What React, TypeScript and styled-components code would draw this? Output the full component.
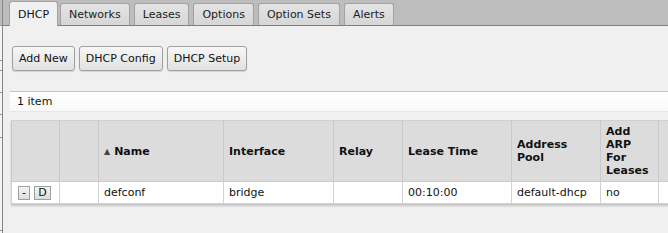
import styled, { createGlobalStyle, css } from "styled-components"

const GlobalStyle = createGlobalStyle`
  html, body {
    margin: 0;
    padding: 0;
    overflow: hidden;
    background: #f0f0f0;
  }
  body {
    font-family: "DejaVu Sans", Verdana, sans-serif;
    font-size: 11px;
    color: #111;
  }
`

const Page = styled.div`
  display: flex;
  height: 233px;
  width: 668px;
  overflow: hidden;
`

const Sidebar = styled.div`
  flex: none;
  width: 2px;
  border-right: 1px solid #858585;
  display: flex;
  flex-direction: column;
  background: #f4f4f4;
`

const SideItem = styled.div<{ $h: number; $top?: boolean }>`
  height: ${({ $h }) => $h}px;
  flex: none;
  border-bottom: 1px solid #9a9a9a;
  background: ${({ $top }) => ($top ? "#bdbdbd" : "#f4f4f4")};
`

const Main = styled.div`
  flex: 1;
  min-width: 0;
  overflow: hidden;
  display: flex;
  flex-direction: column;
`

const TabBar = styled.div`
  display: flex;
  align-items: flex-end;
  height: 25px;
  padding-left: 6px;
  background: #bdbdbd;
  border-bottom: 1px solid #7f7f7f;
`

const Tab = styled.div<{ $active?: boolean }>`
  position: relative;
  box-sizing: border-box;
  height: 22px;
  padding: 0 8px;
  margin-right: 4px;
  display: flex;
  align-items: center;
  border: 1px solid #a2a2a2;
  border-bottom: none;
  border-radius: 3px 3px 0 0;
  background: linear-gradient(#e4e4e4, #d6d6d6);
  color: #222;
  ${({ $active }) =>
    $active &&
    css`
      height: 25px;
      margin-bottom: -1px;
      margin-right: 2px;
      padding-top: 1px;
      background: #f0f0f0;
      color: #111;
    `}
`

const Content = styled.div`
  display: flex;
  flex-direction: column;
  padding: 20px 0 0 7px;
`

const Toolbar = styled.div`
  display: flex;
  gap: 4px;
  padding-left: 2px;
  margin-bottom: 20px;
`

const Button = styled.button`
  box-sizing: border-box;
  height: 25px;
  padding: 0 6px;
  font: inherit;
  color: #111;
  border: 1px solid #a0a0a0;
  border-radius: 3px;
  background: linear-gradient(#f7f7f7, #e1e1e1);
  box-shadow: 0 1px 1px rgba(0, 0, 0, 0.12);
`

const StatusBar = styled.div`
  box-sizing: border-box;
  width: 700px;
  height: 21px;
  padding-left: 7px;
  display: flex;
  align-items: center;
  border-top: 1px solid #c4c4c4;
  border-bottom: 1px solid #e6e6e6;
  background: linear-gradient(#ffffff, #f9f9f9);
  margin-bottom: 8px;
`

const Table = styled.table`
  margin-left: 1px;
  border-collapse: collapse;
  table-layout: fixed;
  width: 757px;
  background: #fff;
  box-shadow: 0 2px 2px rgba(0, 0, 0, 0.18);
`

const HeadCell = styled.th`
  height: 60px;
  padding: 0 5px;
  text-align: left;
  vertical-align: middle;
  font-weight: bold;
  line-height: 13px;
  color: #111;
  background: #dcdcdc;
  border: 1px solid #c9c9c9;
  border-top-color: #d0d0d0;
`

const Cell = styled.td`
  height: 21px;
  padding: 0 5px;
  white-space: nowrap;
  border: 1px solid #d2d2d2;
  border-top-color: #c9c9c9;
`

const SortArrow = styled.span`
  display: inline-block;
  font-size: 8px;
  color: #444;
  margin-right: 4px;
  vertical-align: 1px;
`

const RowActions = styled.div`
  display: flex;
  gap: 4px;
  padding-left: 1px;
  padding-top: 1px;
`

const RowButton = styled.button<{ $w: number }>`
  box-sizing: border-box;
  width: ${({ $w }) => $w}px;
  height: 14px;
  padding: 0;
  font: inherit;
  font-size: 11px;
  line-height: 12px;
  color: #111;
  border: 1px solid #a0a0a0;
  background: linear-gradient(#f4f4f4, #dcdcdc);
`

const tabs = ["DHCP", "Networks", "Leases", "Options", "Option Sets", "Alerts"]
const columns = [48, 39, 125, 110, 69, 109, 89, 58, 110]
const sideItems = [25, 34, 9, 21, 21, 22, 92]

const App = () => (
  <>
    <GlobalStyle />
    <Page>
      <Sidebar>
        {sideItems.map((h, i) => (
          <SideItem key={i} $h={h} $top={i === 0} />
        ))}
      </Sidebar>
      <Main>
        <TabBar>
          {tabs.map((t, i) => (
            <Tab key={t} $active={i === 0}>
              {t}
            </Tab>
          ))}
        </TabBar>
        <Content>
          <Toolbar>
            <Button>Add New</Button>
            <Button>DHCP Config</Button>
            <Button>DHCP Setup</Button>
          </Toolbar>
          <StatusBar>1 item</StatusBar>
          <Table>
            <colgroup>
              {columns.map((w, i) => (
                <col key={i} style={{ width: w }} />
              ))}
            </colgroup>
            <thead>
              <tr>
                <HeadCell />
                <HeadCell />
                <HeadCell>
                  <SortArrow>▲</SortArrow>Name
                </HeadCell>
                <HeadCell>Interface</HeadCell>
                <HeadCell>Relay</HeadCell>
                <HeadCell>Lease Time</HeadCell>
                <HeadCell>Address Pool</HeadCell>
                <HeadCell>Add ARP For Leases</HeadCell>
                <HeadCell />
              </tr>
            </thead>
            <tbody>
              <tr>
                <Cell>
                  <RowActions>
                    <RowButton $w={12}>-</RowButton>
                    <RowButton $w={17}>D</RowButton>
                  </RowActions>
                </Cell>
                <Cell />
                <Cell>defconf</Cell>
                <Cell>bridge</Cell>
                <Cell />
                <Cell>00:10:00</Cell>
                <Cell>default-dhcp</Cell>
                <Cell>no</Cell>
                <Cell />
              </tr>
            </tbody>
          </Table>
        </Content>
      </Main>
    </Page>
  </>
)

export default App
